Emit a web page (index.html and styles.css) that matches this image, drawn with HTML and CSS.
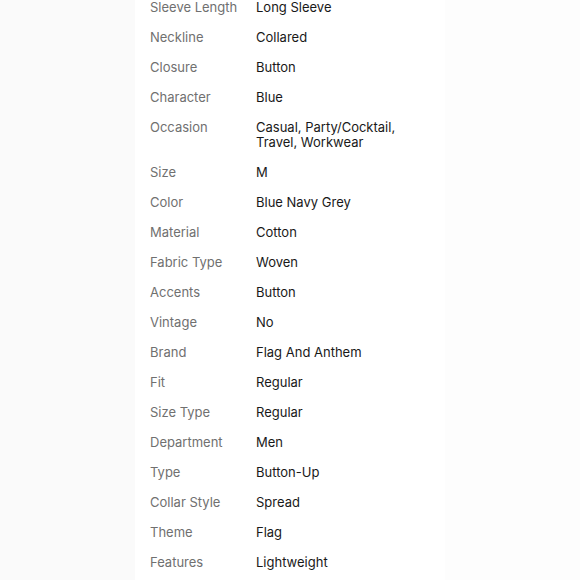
FILE: index.html
```html
<!DOCTYPE html>
<html>
<head>
<meta charset="utf-8">
<link rel="stylesheet" href="styles.css">
</head>
<body>
<div class="stage">
  <div class="side side-left"></div>
  <div class="panel">
    <dl class="specs">
      <div class="row"><dt>Sleeve Length</dt><dd>Long Sleeve</dd></div>
      <div class="row"><dt>Neckline</dt><dd>Collared</dd></div>
      <div class="row"><dt>Closure</dt><dd>Button</dd></div>
      <div class="row"><dt>Character</dt><dd>Blue</dd></div>
      <div class="row"><dt>Occasion</dt><dd>Casual, Party/Cocktail, Travel, Workwear</dd></div>
      <div class="row"><dt>Size</dt><dd>M</dd></div>
      <div class="row"><dt>Color</dt><dd>Blue Navy Grey</dd></div>
      <div class="row"><dt>Material</dt><dd>Cotton</dd></div>
      <div class="row"><dt>Fabric Type</dt><dd>Woven</dd></div>
      <div class="row"><dt>Accents</dt><dd>Button</dd></div>
      <div class="row"><dt>Vintage</dt><dd>No</dd></div>
      <div class="row"><dt>Brand</dt><dd>Flag And Anthem</dd></div>
      <div class="row"><dt>Fit</dt><dd>Regular</dd></div>
      <div class="row"><dt>Size Type</dt><dd>Regular</dd></div>
      <div class="row"><dt>Department</dt><dd>Men</dd></div>
      <div class="row"><dt>Type</dt><dd>Button-Up</dd></div>
      <div class="row"><dt>Collar Style</dt><dd>Spread</dd></div>
      <div class="row"><dt>Theme</dt><dd>Flag</dd></div>
      <div class="row"><dt>Features</dt><dd>Lightweight</dd></div>
    </dl>
  </div>
  <div class="side side-right"></div>
</div>
</body>
</html>
```
FILE: styles.css
```css
html, body {
  margin: 0;
  padding: 0;
  width: 580px;
  height: 580px;
  overflow: hidden;
  background: #fbfbfb;
}
.stage {
  display: flex;
  height: 580px;
}
.side-left {
  flex: 0 0 135px;
  background: #fafafa;
}
.side-right {
  flex: 0 0 135px;
  background: #fdfdfd;
}
.panel {
  flex: 0 0 310px;
  background: #ffffff;
  padding: 0 15px;
  box-sizing: border-box;
}
.specs {
  margin: 0;
  display: flex;
  flex-direction: column;
  gap: 15px;
  font-family: Inter, "Liberation Sans", sans-serif;
  font-size: 13px;
  line-height: 15px;
}
.row {
  display: grid;
  grid-template-columns: 106px 1fr;
}
dt {
  color: #707070;
  margin: 0;
}
dd {
  color: #191919;
  margin: 0;
  max-width: 160px;
}
```
